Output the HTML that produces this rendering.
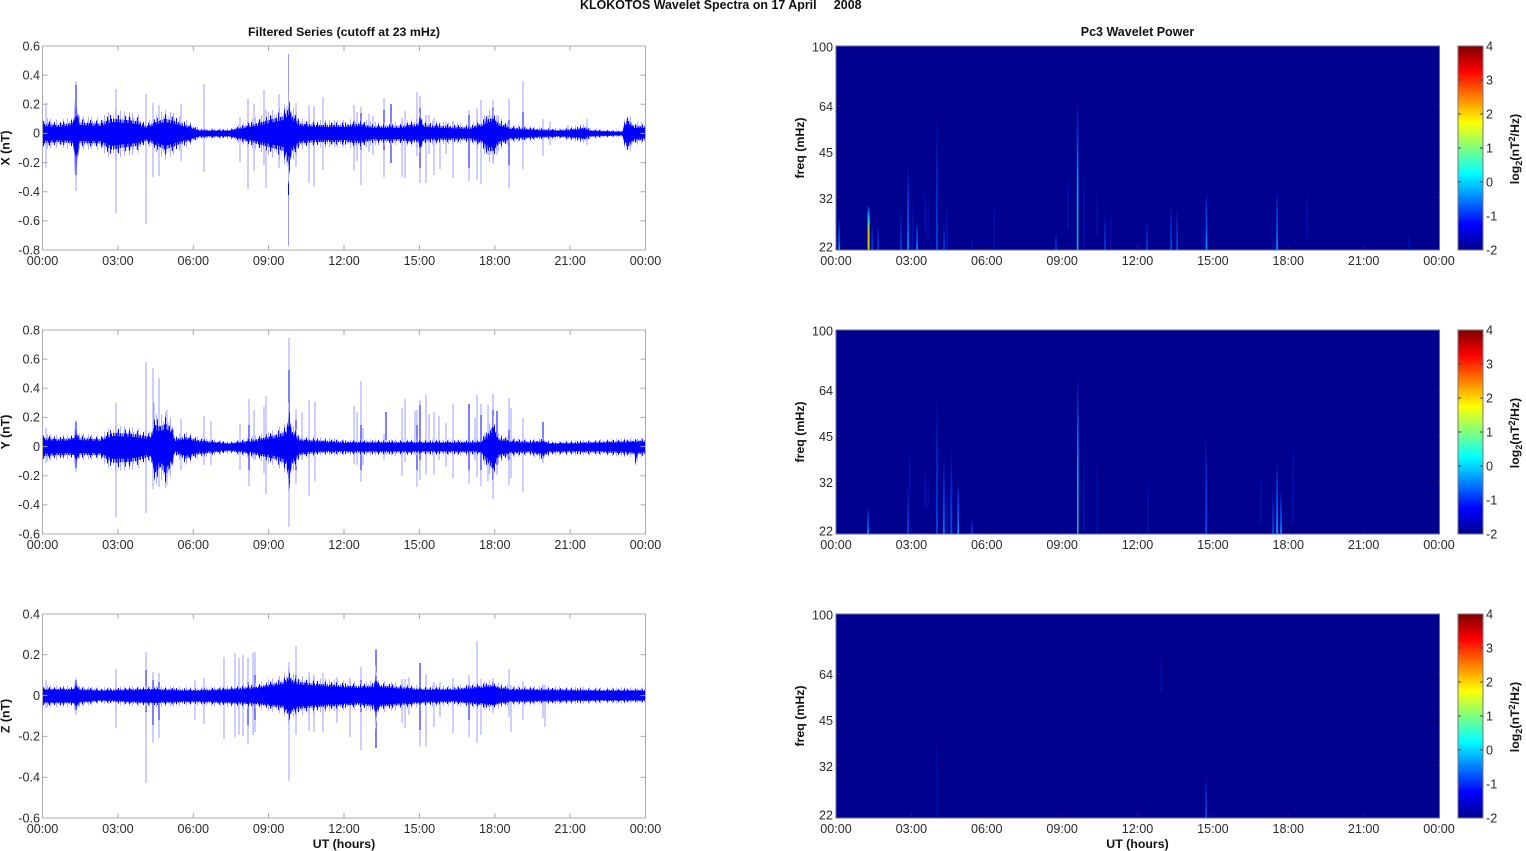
<!DOCTYPE html>
<html><head><meta charset="utf-8"><title>KLOKOTOS Wavelet Spectra</title>
<style>
html,body{margin:0;padding:0;background:#fff;overflow:hidden}
svg{display:block;filter:blur(.35px)}
text{font-family:"Liberation Sans",sans-serif;font-size:12.6px;fill:#2a2a2a}
.b{font-weight:bold;fill:#111;font-size:12.35px}
.e{text-anchor:end}.m{text-anchor:middle}
</style></head><body>
<svg xmlns="http://www.w3.org/2000/svg" width="1526" height="851" viewBox="0 0 1526 851">
<defs>
<clipPath id="c1"><rect x="43" y="46" width="603" height="204"/></clipPath>
<clipPath id="c2"><rect x="43" y="330" width="603" height="204"/></clipPath>
<clipPath id="c3"><rect x="43" y="614" width="603" height="204"/></clipPath>
<pattern id="pL1" patternUnits="userSpaceOnUse" width="23" height="100"><path fill="#b4b4ff" d="M0 0h1v100H0ZM2 0h1.2v100H2ZM5 0h.8v100H5ZM7.5 0h1v100h-1ZM10 0h1.5v100H10ZM13 0h.7v100H13ZM15 0h1v100H15ZM18 0h1.3v100H18ZM21 0h.8v100H21Z"/></pattern>
<pattern id="pL2" patternUnits="userSpaceOnUse" width="41" height="100"><path fill="#b0b0ff" d="M1 0h1v100H1ZM6 0h1v100H6ZM9 0h1v100H9ZM15 0h1v100H15ZM22 0h1v100H22ZM26 0h1v100H26ZM33 0h1v100H33ZM38 0h1v100H38Z"/></pattern>
<pattern id="pK1" patternUnits="userSpaceOnUse" width="29" height="100"><path fill="#0000ff" d="M0 0h1.4v100H0ZM2 0h1v100H2ZM3.6 0h1.8v100H3.6ZM6.4 0h1v100H6.4ZM8 0h.9v100H8ZM10 0h1.6v100H10ZM12.4 0h1v100H12.4ZM14.2 0h2v100H14.2ZM17.4 0h.8v100H17.4ZM19 0h1.4v100H19ZM21.4 0h1v100H21.4ZM23.4 0h1.6v100H23.4ZM26 0h1v100H26ZM27.6 0h.9v100H27.6Z"/></pattern>
<pattern id="pK2" patternUnits="userSpaceOnUse" width="47" height="100"><path fill="#0000ff" d="M2 0h1v100H2ZM7 0h.9v100H7ZM13 0h1v100H13ZM16 0h.9v100H16ZM24 0h1v100H24ZM31 0h.9v100H31ZM35 0h1v100H35ZM43 0h.9v100H43Z"/></pattern>
<polygon id="p1" points="43,126 60,127 73,125 76,114 79,125 100,126 112,122 125,123 138,124 146,128 155,125 165,122 175,124 190,128 200,131 230,131 245,128 265,124 284,120 289,114 292,120 300,126 320,127 345,127 360,126 372,128 400,128 418,126 421,122 424,127 470,129 482,126 489,122 493,122 498,125 510,129 530,130 560,131 585,129 590,131 622,132 626,124 629,124 634,128 645,128 645,138 634,139 629,143 626,143 622,135 590,136 585,138 560,136 530,137 510,138 498,142 493,147 489,147 482,141 470,138 424,139 421,144 418,140 400,139 372,139 360,141 345,140 320,140 300,141 292,147 289,158 284,147 265,143 245,139 230,136 200,136 190,139 175,143 165,146 155,142 146,139 138,143 125,144 112,146 100,141 79,141 76,160 73,141 60,140 43,141"/>
<polygon id="p2" points="43,440 60,441 74,440 76,432 78,440 100,441 113,436 135,437 150,439 155,430 160,431 166,429 170,431 175,441 185,439 200,442 230,444 250,442 275,438 286,435 289,424 292,435 300,441 320,442 345,443 372,443 480,443 487,438 493,431 498,440 510,442 530,443 543,442 550,444 600,443 645,442 645,452 638,452 636,458 634,452 600,451 550,451 543,454 530,451 510,452 498,455 493,464 487,458 480,451 372,451 345,451 320,451 300,453 292,460 289,472 286,460 275,456 250,452 230,450 200,452 185,456 175,451 170,463 166,468 160,462 155,467 150,454 135,458 113,459 100,453 78,453 76,462 74,453 60,453 43,454"/>
<polygon id="p3" points="43,690 74,690 76,684 78,690 100,691 146,690 200,691 230,690 260,688 284,684 289,680 294,684 320,686 360,688 374,687 376,678 378,687 420,690 455,690 490,687 510,690 600,691 645,691 645,700 600,700 510,701 490,704 455,701 420,702 378,705 376,715 374,705 360,703 320,705 294,707 289,712 284,706 260,703 230,702 200,701 146,702 100,700 78,702 76,708 74,702 43,702"/>
<path id="fx" fill="none" stroke="#a8a8a8" stroke-width="1" d="M42.5 46H645.5V250H42.5ZM117.9 46v5M193.3 46v5M268.6 46v5M344 46v5M419.4 46v5M494.8 46v5M570.1 46v5M117.9 250v-5M193.3 250v-5M268.6 250v-5M344 250v-5M419.4 250v-5M494.8 250v-5M570.1 250v-5"/>
<linearGradient id="g0" x1="0" y1="1" x2="0" y2="0"><stop offset="0" stop-color="#0014b4"/><stop offset=".5" stop-color="#0014b4"/><stop offset="1" stop-color="#00008f"/></linearGradient>
<linearGradient id="g1" x1="0" y1="1" x2="0" y2="0"><stop offset="0" stop-color="#0050f4"/><stop offset=".6" stop-color="#0024c8"/><stop offset="1" stop-color="#00008f"/></linearGradient>
<linearGradient id="g2" x1="0" y1="1" x2="0" y2="0"><stop offset="0" stop-color="#00a0ff"/><stop offset=".3" stop-color="#0060f0"/><stop offset=".7" stop-color="#0030d4"/><stop offset="1" stop-color="#00008f"/></linearGradient>
<linearGradient id="g3" x1="0" y1="1" x2="0" y2="0"><stop offset="0" stop-color="#d8d000"/><stop offset=".45" stop-color="#c8c810"/><stop offset=".6" stop-color="#30e0c0"/><stop offset=".78" stop-color="#00b0ff"/><stop offset="1" stop-color="#00008f"/></linearGradient>
<linearGradient id="g4" x1="0" y1="1" x2="0" y2="0"><stop offset="0" stop-color="#20b0a0"/><stop offset=".45" stop-color="#00a0f0"/><stop offset=".8" stop-color="#0030d4"/><stop offset="1" stop-color="#00008f"/></linearGradient>
<linearGradient id="jet" x1="0" y1="1" x2="0" y2="0"><stop offset="0" stop-color="#00008f"/><stop offset=".125" stop-color="#0000ff"/><stop offset=".375" stop-color="#00ffff"/><stop offset=".625" stop-color="#ffff00"/><stop offset=".875" stop-color="#ff0000"/><stop offset="1" stop-color="#800000"/></linearGradient>
</defs>

<text class="b" x="580" y="9" xml:space="preserve" style="white-space:pre;font-size:12.44px">KLOKOTOS Wavelet Spectra on 17 April     2008</text>
<text class="b m" x="344" y="36">Filtered Series (cutoff at 23 mHz)</text>
<text class="b m" x="1137.5" y="36" style="font-size:12.5px">Pc3 Wavelet Power</text>

<!-- ROW 1 LEFT -->
<g clip-path="url(#c1)">
<path fill="none" stroke="#9c9cff" stroke-width="1" d="M46 103V168M76 81V191M116 89V213M146 94V224M153 103V177M159 105V176M181 104V161M204 84V172M240 117V162M248 99V189M254 104V171M264 90V165M266 110V188M279 94V168M288.5 54V246M296 103V167M309 105V183M314 106V187M323 97V170M354 105V171M361 107V185M357 112V161M369 114V152M373 116V155M384 98V177M391 104V163M402 118V177M405 111V178M417 92V156M420 96V183M426 115V183M429 115V154M434 118V175M440 122V169M446 122V154M453 121V178M469 110V181M477 108V180M481 100V184M488 115V155M493 100V164M497 115V155M509 99V188M523 81V169M543 119V156M550 122V145M568 125V140M587 119V145"/>
<path fill="none" stroke="#0000ff" stroke-width="1" d="M76 85V175M288.5 95V195M361 113V150M384 110V150M391 104V163M420 108V168M469 115V168M493 108V148M509 120V165M523 112V140"/>
<use href="#p1" fill="url(#pL2)" transform="translate(0 133.4) scale(1 2.1) translate(0 -133.4)"/>
<use href="#p1" fill="url(#pL1)" transform="translate(0 133.4) scale(1 1.6) translate(0 -133.4)"/>
<use href="#p1" fill="url(#pK2)" transform="translate(0 133.4) scale(1 1.7) translate(0 -133.4)"/>
<use href="#p1" fill="url(#pK1)" transform="translate(0 133.4) scale(1 1.3) translate(0 -133.4)"/>
<use href="#p1" fill="#0000ff"/>
</g>
<use href="#fx"/>
<path fill="none" stroke="#a8a8a8" d="M42.5 75.1h5M42.5 104.3h5M42.5 133.4h5M42.5 162.6h5M42.5 191.7h5M42.5 220.9h5M645.5 75.1h-5M645.5 104.3h-5M645.5 133.4h-5M645.5 162.6h-5M645.5 191.7h-5M645.5 220.9h-5"/>
<text class="e" x="40" y="50.3">0.6</text><text class="e" x="40" y="79.4">0.4</text><text class="e" x="40" y="108.6">0.2</text><text class="e" x="40" y="137.7">0</text><text class="e" x="40" y="166.9">-0.2</text><text class="e" x="40" y="196">-0.4</text><text class="e" x="40" y="225.2">-0.6</text><text class="e" x="40" y="254.3">-0.8</text>
<g><text class="m" x="42.5" y="265">00:00</text><text class="m" x="117.9" y="265">03:00</text><text class="m" x="193.3" y="265">06:00</text><text class="m" x="268.6" y="265">09:00</text><text class="m" x="344" y="265">12:00</text><text class="m" x="419.4" y="265">15:00</text><text class="m" x="494.8" y="265">18:00</text><text class="m" x="570.1" y="265">21:00</text><text class="m" x="645.5" y="265">00:00</text></g>
<text class="b m" transform="translate(9.5 148) rotate(-90)">X (nT)</text>

<!-- ROW 2 LEFT -->
<g clip-path="url(#c2)">
<path fill="none" stroke="#9c9cff" stroke-width="1" d="M46 428V463M76 420V472M116 403V517M146 362V513M153 368V489M154 403V470M159 378V487M167 410V485M181 419V470M204 416V465M211 421V465M240 424V470M249 399V486M254 410V460M264 407V473M266 396V494M289 338V527M296 409V484M302 412V460M309 400V496M315 402V481M354 406V464M357 412V465M361 381V482M363 428V465M384 434V460M386 412V455M402 408V476M405 399V462M415 411V455M417 410V487M420 400V480M426 395V475M429 414V455M434 412V475M439 416V460M446 423V467M453 404V478M469 404V484M475 418V460M477 395V477M481 404V486M488 405V481M493 394V499M497 411V475M509 398V485M511 408V478M523 418V492M543 422V463"/>
<path fill="none" stroke="#0000ff" stroke-width="1" d="M76 422V468M289 370V488M296 420V470M249 425V470M361 425V470M386 412V440M417 425V470M420 405V460M469 404V470M481 415V470M493 410V480M497 411V465M509 430V460M543 422V458"/>
<use href="#p2" fill="url(#pL2)" transform="translate(0 446.6) scale(1 2) translate(0 -446.6)"/>
<use href="#p2" fill="url(#pL1)" transform="translate(0 446.6) scale(1 1.5) translate(0 -446.6)"/>
<use href="#p2" fill="url(#pK2)" transform="translate(0 446.6) scale(1 1.7) translate(0 -446.6)"/>
<use href="#p2" fill="url(#pK1)" transform="translate(0 446.6) scale(1 1.3) translate(0 -446.6)"/>
<use href="#p2" fill="#0000ff"/>
</g>
<use href="#fx" y="284"/>
<path fill="none" stroke="#a8a8a8" d="M42.5 359.1h5M42.5 388.3h5M42.5 417.4h5M42.5 446.6h5M42.5 475.7h5M42.5 504.9h5M645.5 359.1h-5M645.5 388.3h-5M645.5 417.4h-5M645.5 446.6h-5M645.5 475.7h-5M645.5 504.9h-5"/>
<text class="e" x="40" y="334.3">0.8</text><text class="e" x="40" y="363.4">0.6</text><text class="e" x="40" y="392.6">0.4</text><text class="e" x="40" y="421.7">0.2</text><text class="e" x="40" y="450.9">0</text><text class="e" x="40" y="480">-0.2</text><text class="e" x="40" y="509.2">-0.4</text><text class="e" x="40" y="538.3">-0.6</text>
<g><text class="m" x="42.5" y="549">00:00</text><text class="m" x="117.9" y="549">03:00</text><text class="m" x="193.3" y="549">06:00</text><text class="m" x="268.6" y="549">09:00</text><text class="m" x="344" y="549">12:00</text><text class="m" x="419.4" y="549">15:00</text><text class="m" x="494.8" y="549">18:00</text><text class="m" x="570.1" y="549">21:00</text><text class="m" x="645.5" y="549">00:00</text></g>
<text class="b m" transform="translate(9.5 432) rotate(-90)">Y (nT)</text>

<!-- ROW 3 LEFT -->
<g clip-path="url(#c3)">
<path fill="none" stroke="#9c9cff" stroke-width="1" d="M46 680V708M76 678V715M116 669V728M146 652V783M153 672V743M159 673V738M195 680V720M204 678V724M224 657V739M235 653V737M239 658V735M243 655V736M248 658V744M253 653V735M255 652V732M289 662V781M296 646V735M309 672V731M314 675V732M323 673V732M337 677V723M350 678V737M361 667V750M376 649V748M402 679V723M405 679V728M409 677V715M420 663V746M426 674V747M434 682V727M440 682V717M453 678V733M469 675V737M477 641V743M481 679V735M493 678V713M509 669V717M511 685V732M523 681V720M543 684V718M545 685V727"/>
<path fill="none" stroke="#0000ff" stroke-width="1" d="M76 680V710M146 670V712M153 680V725M159 682V720M248 682V725M255 675V720M289 675V712M296 675V715M361 680V712M376 650V748M420 663V730M469 685V720M493 682V705"/>
<use href="#p3" fill="url(#pL2)" transform="translate(0 695.6) scale(1 1.8) translate(0 -695.6)"/>
<use href="#p3" fill="url(#pL1)" transform="translate(0 695.6) scale(1 1.4) translate(0 -695.6)"/>
<use href="#p3" fill="url(#pK2)" transform="translate(0 695.6) scale(1 1.5) translate(0 -695.6)"/>
<use href="#p3" fill="url(#pK1)" transform="translate(0 695.6) scale(1 1.2) translate(0 -695.6)"/>
<use href="#p3" fill="#0000ff"/>
</g>
<use href="#fx" y="568"/>
<path fill="none" stroke="#a8a8a8" d="M42.5 654.8h5M42.5 695.6h5M42.5 736.4h5M42.5 777.2h5M645.5 654.8h-5M645.5 695.6h-5M645.5 736.4h-5M645.5 777.2h-5"/>
<text class="e" x="40" y="618.3">0.4</text><text class="e" x="40" y="659.1">0.2</text><text class="e" x="40" y="699.9">0</text><text class="e" x="40" y="740.7">-0.2</text><text class="e" x="40" y="781.5">-0.4</text><text class="e" x="40" y="822.3">-0.6</text>
<g><text class="m" x="42.5" y="833">00:00</text><text class="m" x="117.9" y="833">03:00</text><text class="m" x="193.3" y="833">06:00</text><text class="m" x="268.6" y="833">09:00</text><text class="m" x="344" y="833">12:00</text><text class="m" x="419.4" y="833">15:00</text><text class="m" x="494.8" y="833">18:00</text><text class="m" x="570.1" y="833">21:00</text><text class="m" x="645.5" y="833">00:00</text></g>
<text class="b m" transform="translate(9.5 716) rotate(-90)">Z (nT)</text>
<text class="b m" x="344" y="848">UT (hours)</text>

<!-- RIGHT ROW 1 -->
<rect x="836" y="46" width="603.5" height="204" fill="#00008f"/>
<g>
<rect x="838.3" y="217" width="1.6" height="33" fill="url(#g2)"/>
<rect x="867.6" y="205" width="2" height="45" fill="url(#g3)"/>
<rect x="871.4" y="223" width="1.4" height="27" fill="url(#g1)"/>
<rect x="877.3" y="223" width="1.4" height="27" fill="url(#g1)"/>
<rect x="900.3" y="210" width="1.4" height="40" fill="url(#g1)"/>
<rect x="907.3" y="165" width="1.6" height="85" fill="url(#g2)"/>
<rect x="912.3" y="197" width="1.4" height="53" fill="url(#g0)"/>
<rect x="916.3" y="220" width="1.6" height="30" fill="url(#g2)"/>
<rect x="924.3" y="187" width="1.4" height="45" fill="url(#g0)"/>
<rect x="927.3" y="193" width="1.4" height="45" fill="url(#g0)"/>
<rect x="936.2" y="113" width="1.6" height="137" fill="url(#g1)"/>
<rect x="943.3" y="223" width="1.4" height="27" fill="url(#g1)"/>
<rect x="946.3" y="197" width="1.4" height="53" fill="url(#g0)"/>
<rect x="971.3" y="237" width="1.4" height="13" fill="url(#g0)"/>
<rect x="993.3" y="197" width="1.4" height="53" fill="url(#g0)"/>
<rect x="1055.3" y="233" width="1.4" height="17" fill="url(#g1)"/>
<rect x="1067.3" y="170" width="1.4" height="60" fill="url(#g0)"/>
<rect x="1076.8" y="100" width="1.6" height="150" fill="url(#g4)"/>
<rect x="1083.3" y="163" width="1.4" height="87" fill="url(#g0)"/>
<rect x="1096.3" y="190" width="1.4" height="45" fill="url(#g0)"/>
<rect x="1104.3" y="213" width="1.4" height="37" fill="url(#g1)"/>
<rect x="1110.3" y="207" width="1.4" height="43" fill="url(#g0)"/>
<rect x="1146.3" y="220" width="1.4" height="30" fill="url(#g1)"/>
<rect x="1170.3" y="203" width="1.6" height="47" fill="url(#g1)"/>
<rect x="1176.3" y="207" width="1.6" height="43" fill="url(#g1)"/>
<rect x="1202.3" y="220" width="1.4" height="30" fill="url(#g0)"/>
<rect x="1205.6" y="190" width="1.6" height="60" fill="url(#g2)"/>
<rect x="1272.3" y="233" width="1.4" height="17" fill="url(#g0)"/>
<rect x="1276.3" y="190" width="1.6" height="60" fill="url(#g2)"/>
<rect x="1306.3" y="187" width="1.4" height="50" fill="url(#g0)"/>
<rect x="1408.3" y="233" width="1.4" height="17" fill="url(#g0)"/>
</g>
<rect x="836" y="46" width="603.5" height="204" fill="none" stroke="#6c6c9c"/>
<path fill="none" stroke="#30304a" stroke-opacity=".5" d="M911.4 250v-5M986.8 250v-5M1062.1 250v-5M1137.5 250v-5M1212.9 250v-5M1288.3 250v-5M1363.6 250v-5M836 106h4M836 152h4M836 197h4M1439 106h-4M1439 152h-4M1439 197h-4"/>
<text class="e" x="833" y="51.5">100</text><text class="e" x="833" y="111">64</text><text class="e" x="833" y="157">45</text><text class="e" x="833" y="203">32</text><text class="e" x="833" y="251.5">22</text>
<g><text class="m" x="836" y="265">00:00</text><text class="m" x="911.4" y="265">03:00</text><text class="m" x="986.8" y="265">06:00</text><text class="m" x="1062.1" y="265">09:00</text><text class="m" x="1137.5" y="265">12:00</text><text class="m" x="1212.9" y="265">15:00</text><text class="m" x="1288.3" y="265">18:00</text><text class="m" x="1363.6" y="265">21:00</text><text class="m" x="1439" y="265">00:00</text></g>
<text class="b m" transform="translate(804 148) rotate(-90)">freq (mHz)</text>
<rect x="1458" y="46" width="25" height="204" fill="url(#jet)" stroke="#777"/>
<path fill="none" stroke="#444" d="M1458 80h3M1458 114h3M1458 148h3M1458 182h3M1458 216h3M1483 80h-3M1483 114h-3M1483 148h-3M1483 182h-3M1483 216h-3"/>
<text x="1486" y="50.3">4</text><text x="1486" y="84.3">3</text><text x="1486" y="118.3">2</text><text x="1486" y="152.3">1</text><text x="1486" y="186.3">0</text><text x="1486" y="220.3">-1</text><text x="1486" y="254.3">-2</text>
<text class="b m" transform="translate(1519 149) rotate(-90)">log<tspan dy="3" font-size="9">2</tspan><tspan dy="-3">(nT</tspan><tspan dy="-4" font-size="9">2</tspan><tspan dy="4">/Hz)</tspan></text>

<!-- RIGHT ROW 2 -->
<rect x="836" y="330" width="603.5" height="204" fill="#00008f"/>
<g>
<rect x="867.3" y="507" width="1.6" height="27" fill="url(#g2)"/>
<rect x="907.3" y="483" width="1.6" height="51" fill="url(#g1)"/>
<rect x="909.3" y="448" width="1.4" height="42" fill="url(#g0)"/>
<rect x="924.3" y="467" width="1.4" height="40" fill="url(#g0)"/>
<rect x="927.3" y="477" width="1.4" height="30" fill="url(#g0)"/>
<rect x="936.2" y="393" width="1.6" height="141" fill="url(#g1)"/>
<rect x="943.2" y="457" width="1.4" height="77" fill="url(#g2)"/>
<rect x="946.3" y="483" width="1.4" height="51" fill="url(#g0)"/>
<rect x="950.4" y="447" width="1.8" height="87" fill="url(#g1)"/>
<rect x="957.4" y="483" width="1.6" height="51" fill="url(#g2)"/>
<rect x="971.3" y="517" width="1.4" height="17" fill="url(#g1)"/>
<rect x="1077" y="375" width="1.6" height="159" fill="url(#g4)"/>
<rect x="1083.3" y="443" width="1.4" height="91" fill="url(#g0)"/>
<rect x="1096.3" y="453" width="1.4" height="81" fill="url(#g0)"/>
<rect x="1147.3" y="477" width="1.4" height="57" fill="url(#g0)"/>
<rect x="1205.4" y="430" width="1.6" height="104" fill="url(#g1)"/>
<rect x="1260.3" y="473" width="1.4" height="50" fill="url(#g0)"/>
<rect x="1272.3" y="490" width="1.6" height="44" fill="url(#g1)"/>
<rect x="1276.2" y="460" width="1.8" height="74" fill="url(#g2)"/>
<rect x="1280.2" y="490" width="1.6" height="44" fill="url(#g2)"/>
<rect x="1292.3" y="433" width="1.4" height="90" fill="url(#g0)"/>
</g>
<rect x="836" y="330" width="603.5" height="204" fill="none" stroke="#6c6c9c"/>
<path fill="none" stroke="#30304a" stroke-opacity=".5" d="M911.4 534v-5M986.8 534v-5M1062.1 534v-5M1137.5 534v-5M1212.9 534v-5M1288.3 534v-5M1363.6 534v-5M836 390h4M836 436h4M836 481h4M1439 390h-4M1439 436h-4M1439 481h-4"/>
<text class="e" x="833" y="335.5">100</text><text class="e" x="833" y="395">64</text><text class="e" x="833" y="441">45</text><text class="e" x="833" y="487">32</text><text class="e" x="833" y="535.5">22</text>
<g><text class="m" x="836" y="549">00:00</text><text class="m" x="911.4" y="549">03:00</text><text class="m" x="986.8" y="549">06:00</text><text class="m" x="1062.1" y="549">09:00</text><text class="m" x="1137.5" y="549">12:00</text><text class="m" x="1212.9" y="549">15:00</text><text class="m" x="1288.3" y="549">18:00</text><text class="m" x="1363.6" y="549">21:00</text><text class="m" x="1439" y="549">00:00</text></g>
<text class="b m" transform="translate(804 432) rotate(-90)">freq (mHz)</text>
<rect x="1458" y="330" width="25" height="204" fill="url(#jet)" stroke="#777"/>
<path fill="none" stroke="#444" d="M1458 364h3M1458 398h3M1458 432h3M1458 466h3M1458 500h3M1483 364h-3M1483 398h-3M1483 432h-3M1483 466h-3M1483 500h-3"/>
<text x="1486" y="334.3">4</text><text x="1486" y="368.3">3</text><text x="1486" y="402.3">2</text><text x="1486" y="436.3">1</text><text x="1486" y="470.3">0</text><text x="1486" y="504.3">-1</text><text x="1486" y="538.3">-2</text>
<text class="b m" transform="translate(1519 433) rotate(-90)">log<tspan dy="3" font-size="9">2</tspan><tspan dy="-3">(nT</tspan><tspan dy="-4" font-size="9">2</tspan><tspan dy="4">/Hz)</tspan></text>

<!-- RIGHT ROW 3 -->
<rect x="836" y="614" width="603.5" height="204" fill="#00008f"/>
<g>
<rect x="936.3" y="735" width="1.4" height="83" fill="url(#g0)"/>
<rect x="1160.3" y="655" width="1.4" height="38" fill="url(#g0)"/>
<rect x="1205.3" y="775" width="1.6" height="43" fill="url(#g1)"/>
</g>
<rect x="836" y="614" width="603.5" height="204" fill="none" stroke="#6c6c9c"/>
<path fill="none" stroke="#30304a" stroke-opacity=".5" d="M911.4 818v-5M986.8 818v-5M1062.1 818v-5M1137.5 818v-5M1212.9 818v-5M1288.3 818v-5M1363.6 818v-5M836 674h4M836 720h4M836 765h4M1439 674h-4M1439 720h-4M1439 765h-4"/>
<text class="e" x="833" y="619.5">100</text><text class="e" x="833" y="679">64</text><text class="e" x="833" y="725">45</text><text class="e" x="833" y="771">32</text><text class="e" x="833" y="819.5">22</text>
<g><text class="m" x="836" y="833">00:00</text><text class="m" x="911.4" y="833">03:00</text><text class="m" x="986.8" y="833">06:00</text><text class="m" x="1062.1" y="833">09:00</text><text class="m" x="1137.5" y="833">12:00</text><text class="m" x="1212.9" y="833">15:00</text><text class="m" x="1288.3" y="833">18:00</text><text class="m" x="1363.6" y="833">21:00</text><text class="m" x="1439" y="833">00:00</text></g>
<text class="b m" transform="translate(804 716) rotate(-90)">freq (mHz)</text>
<text class="b m" x="1137.5" y="848">UT (hours)</text>
<rect x="1458" y="614" width="25" height="204" fill="url(#jet)" stroke="#777"/>
<path fill="none" stroke="#444" d="M1458 648h3M1458 682h3M1458 716h3M1458 750h3M1458 784h3M1483 648h-3M1483 682h-3M1483 716h-3M1483 750h-3M1483 784h-3"/>
<text x="1486" y="618.3">4</text><text x="1486" y="652.3">3</text><text x="1486" y="686.3">2</text><text x="1486" y="720.3">1</text><text x="1486" y="754.3">0</text><text x="1486" y="788.3">-1</text><text x="1486" y="822.3">-2</text>
<text class="b m" transform="translate(1519 717) rotate(-90)">log<tspan dy="3" font-size="9">2</tspan><tspan dy="-3">(nT</tspan><tspan dy="-4" font-size="9">2</tspan><tspan dy="4">/Hz)</tspan></text>
</svg>
</body></html>
